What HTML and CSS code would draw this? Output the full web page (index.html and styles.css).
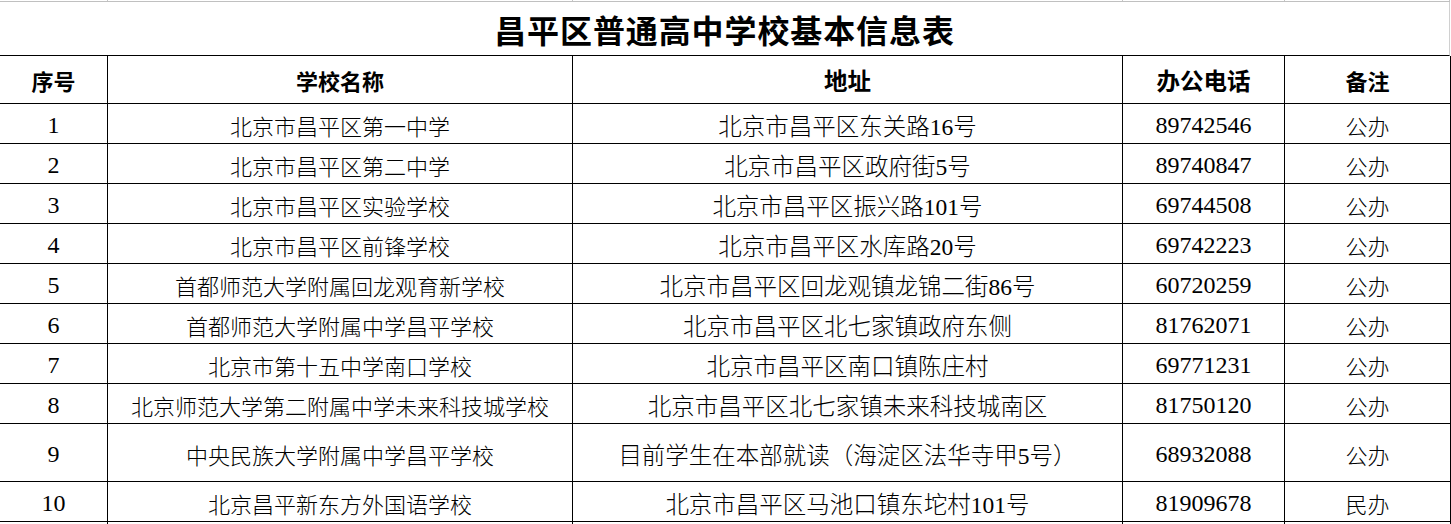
FILE: index.html
```html
<!DOCTYPE html>
<html lang="zh-CN">
<head>
<meta charset="utf-8">
<title>昌平区普通高中学校基本信息表</title>
<link rel="stylesheet" href="styles.css">
</head>
<body>
<div class="sheet">
  <div class="top">
    <div class="ticks"><span class="c1"></span><span class="c2"></span><span class="c3"></span><span class="c4"></span><span class="c5"></span></div>
    <div class="topline"></div>
  </div>
  <div class="title">昌平区普通高中学校基本信息表</div>
  <div class="grid">
    <div class="row head">
      <div class="cell c1">序号</div>
      <div class="cell c2">学校名称</div>
      <div class="cell c3">地址</div>
      <div class="cell c4">办公电话</div>
      <div class="cell c5">备注</div>
    </div>
    <div class="row">
      <div class="cell c1">1</div>
      <div class="cell c2">北京市昌平区第一中学</div>
      <div class="cell c3">北京市昌平区东关路16号</div>
      <div class="cell c4">89742546</div>
      <div class="cell c5">公办</div>
    </div>
    <div class="row">
      <div class="cell c1">2</div>
      <div class="cell c2">北京市昌平区第二中学</div>
      <div class="cell c3">北京市昌平区政府街5号</div>
      <div class="cell c4">89740847</div>
      <div class="cell c5">公办</div>
    </div>
    <div class="row">
      <div class="cell c1">3</div>
      <div class="cell c2">北京市昌平区实验学校</div>
      <div class="cell c3">北京市昌平区振兴路101号</div>
      <div class="cell c4">69744508</div>
      <div class="cell c5">公办</div>
    </div>
    <div class="row">
      <div class="cell c1">4</div>
      <div class="cell c2">北京市昌平区前锋学校</div>
      <div class="cell c3">北京市昌平区水库路20号</div>
      <div class="cell c4">69742223</div>
      <div class="cell c5">公办</div>
    </div>
    <div class="row">
      <div class="cell c1">5</div>
      <div class="cell c2">首都师范大学附属回龙观育新学校</div>
      <div class="cell c3">北京市昌平区回龙观镇龙锦二街86号</div>
      <div class="cell c4">60720259</div>
      <div class="cell c5">公办</div>
    </div>
    <div class="row">
      <div class="cell c1">6</div>
      <div class="cell c2">首都师范大学附属中学昌平学校</div>
      <div class="cell c3">北京市昌平区北七家镇政府东侧</div>
      <div class="cell c4">81762071</div>
      <div class="cell c5">公办</div>
    </div>
    <div class="row">
      <div class="cell c1">7</div>
      <div class="cell c2">北京市第十五中学南口学校</div>
      <div class="cell c3">北京市昌平区南口镇陈庄村</div>
      <div class="cell c4">69771231</div>
      <div class="cell c5">公办</div>
    </div>
    <div class="row">
      <div class="cell c1">8</div>
      <div class="cell c2">北京师范大学第二附属中学未来科技城学校</div>
      <div class="cell c3">北京市昌平区北七家镇未来科技城南区</div>
      <div class="cell c4">81750120</div>
      <div class="cell c5">公办</div>
    </div>
    <div class="row tall">
      <div class="cell c1">9</div>
      <div class="cell c2">中央民族大学附属中学昌平学校</div>
      <div class="cell c3">目前学生在本部就读（海淀区法华寺甲5号）</div>
      <div class="cell c4">68932088</div>
      <div class="cell c5">公办</div>
    </div>
    <div class="row">
      <div class="cell c1">10</div>
      <div class="cell c2">北京昌平新东方外国语学校</div>
      <div class="cell c3">北京市昌平区马池口镇东坨村101号</div>
      <div class="cell c4">81909678</div>
      <div class="cell c5">民办</div>
    </div>
    <div class="row stub">
      <div class="cell c1"></div>
      <div class="cell c2"></div>
      <div class="cell c3"></div>
      <div class="cell c4"></div>
      <div class="cell c5"></div>
    </div>
  </div>
</div>
</body>
</html>
```
FILE: styles.css
```css
html, body {
  margin: 0;
  padding: 0;
  background: #ffffff;
}
body {
  width: 1451px;
  height: 524px;
  overflow: hidden;
  font-family: "Liberation Serif", "Noto Sans CJK SC", serif;
  color: #000;
}
.sheet {
  width: 1451px;
}
.top {
  height: 2px;
}
.ticks {
  display: grid;
  grid-template-columns: 108px 465px 550px 162px 165px;
  height: 1px;
}
.ticks span {
  border-right: 1px solid #c6c6c6;
}
.topline {
  height: 1px;
  background: #c0c0c0;
  width: 1450px;
}
.title {
  box-sizing: border-box;
  width: 1450px;
  height: 54px;
  border-bottom: 1px solid #000;
  border-right: 1px solid #d0d0d0;
  display: flex;
  align-items: center;
  justify-content: center;
  font-family: "Noto Sans CJK SC", sans-serif;
  font-weight: 700;
  font-size: 32px;
  letter-spacing: 0.9px;
  padding-top: 1px;
}
.row {
  display: grid;
  grid-template-columns: 108px 465px 550px 162px 166px;
  height: 40px;
}
.row.head {
  height: 48px;
}
.row.tall {
  height: 58px;
}
.row.stub {
  height: 3px;
}
.row.stub .cell {
  border-bottom: none;
}
.cell {
  box-sizing: border-box;
  border-right: 1px solid #000;
  border-bottom: 1px solid #000;
  display: flex;
  align-items: center;
  justify-content: center;
  white-space: nowrap;
  font-size: 22px;
  font-weight: 300;
  padding-top: 3px;
}
.cell.c1 {
  font-size: 24px;
}
.cell.c3 {
  font-size: 23.5px;
}
.cell.c4 {
  font-size: 24px;
}
.head .cell {
  font-weight: 700;
  font-size: 22px;
  padding-top: 1px;
}
.head .cell.c3,
.head .cell.c4 {
  font-size: 23.5px;
}
```
